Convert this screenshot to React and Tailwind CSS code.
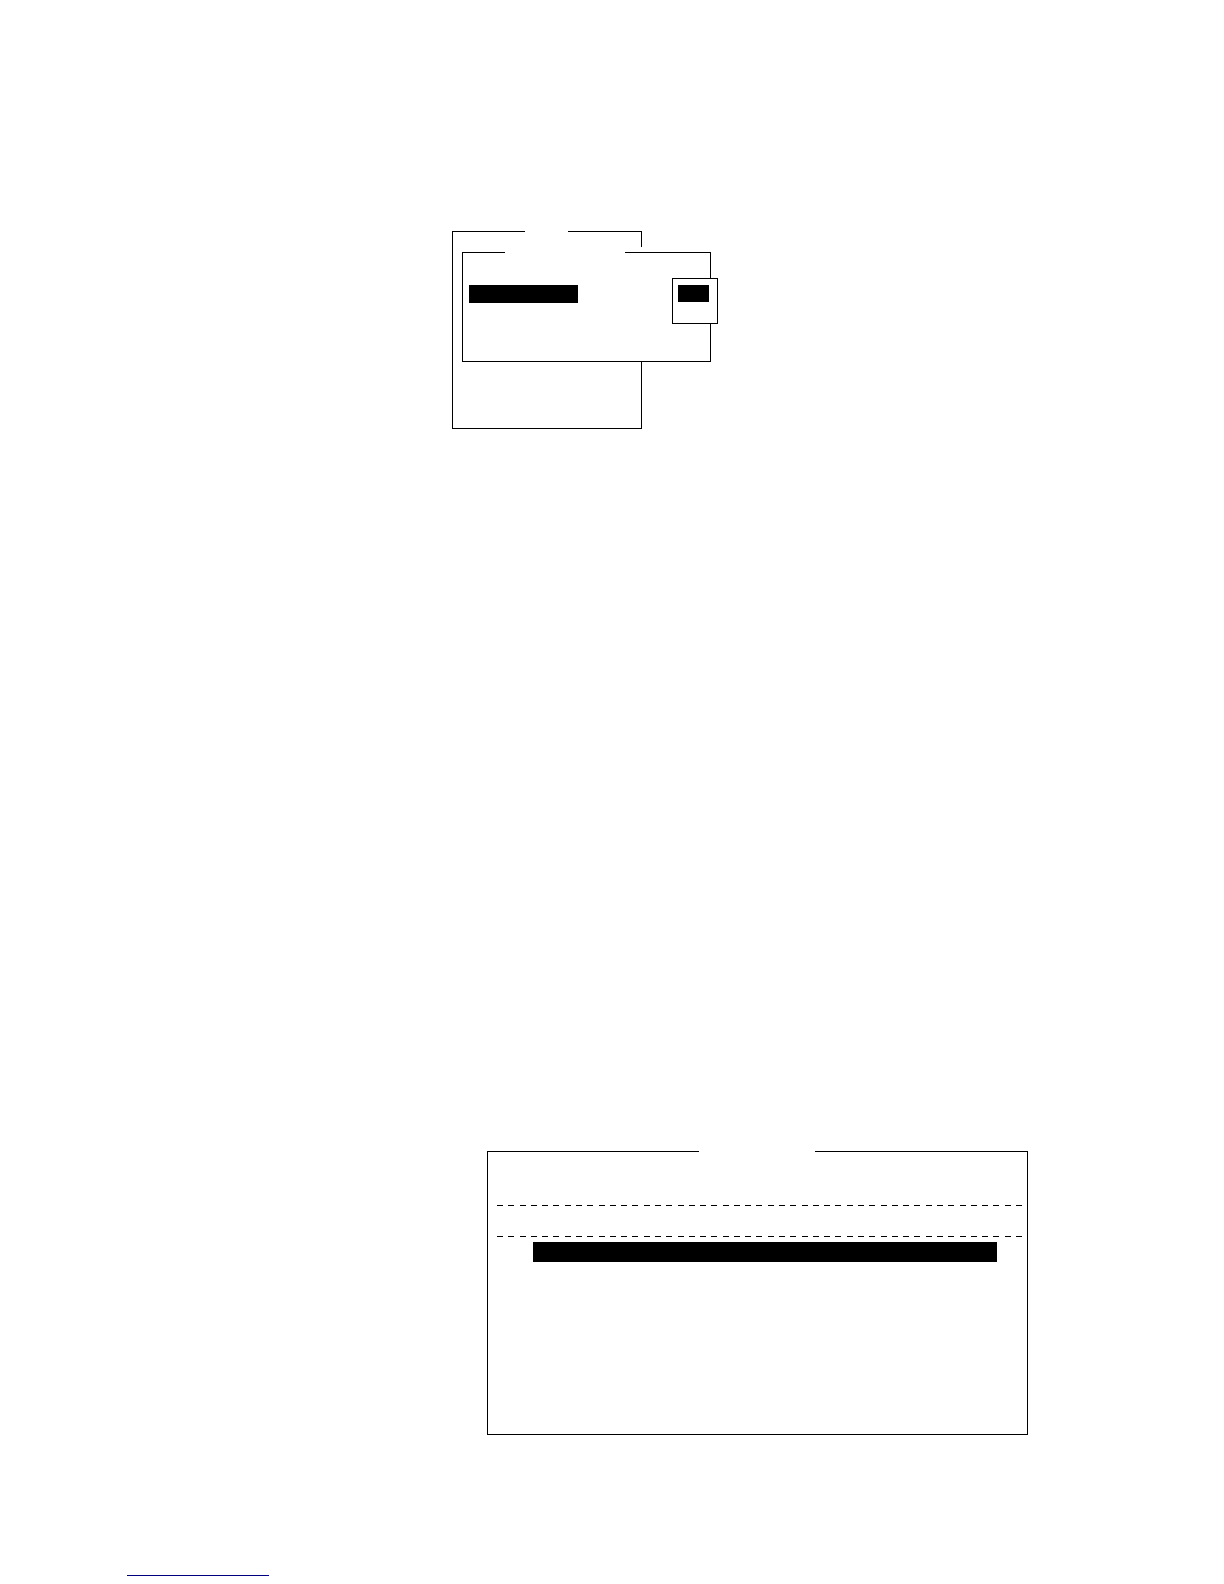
const DASHES = Array.from({ length: 47 }, (_, i) => i);

function DashedRule() {
  return (
    <div role="separator" className="flex h-px justify-between">
      {DASHES.map((i) => (
        <span key={i} className="h-px w-1.5 bg-black" />
      ))}
    </div>
  );
}

// Top edge of a window, open in the middle where its title would sit.
function TitleEdge({ left, gap }) {
  return (
    <div className="flex h-px">
      <span className={`h-px bg-black ${left}`} />
      <span className={`h-px ${gap}`} />
      <span className="h-px grow bg-black" />
    </div>
  );
}

function Menus() {
  return (
    <section aria-label="Menu windows" className="relative ml-[452px] w-[190px]">
      <TitleEdge left="w-[73px]" gap="w-[43px]" />
      <div className="h-[197px] border border-t-0 border-black" />

      <div className="absolute top-4 left-[10px] w-[249px] bg-white pt-[5px]">
        <TitleEdge left="w-[43px]" gap="w-[120px]" />
        <div className="h-[109px] border border-t-0 border-black px-1.5 pt-8">
          <button
            type="button"
            aria-label="Selected item"
            className="block h-[18px] w-[109px] bg-black"
          />
        </div>

        <div className="absolute top-[31px] -right-[7px] h-[46px] w-[46px] border border-black bg-white px-[5px] py-1.5">
          <button
            type="button"
            aria-label="Selected option"
            className="block h-[17px] w-[31px] bg-black"
          />
        </div>
      </div>
    </section>
  );
}

function ListWindow() {
  return (
    <section aria-label="List window" className="mr-[196px] ml-[487px]">
      <TitleEdge left="w-[212px]" gap="w-[116px]" />
      <div className="border border-t-0 border-black pt-[53px] pr-[5px] pb-[172px] pl-[9px]">
        <DashedRule />
        <div className="h-[30px]" />
        <DashedRule />
        <button
          type="button"
          aria-label="Selected row"
          className="mt-[5px] ml-9 block h-5 w-[464px] bg-black"
        />
      </div>
    </section>
  );
}

export default function App() {
  return (
    <main className="flex min-h-screen flex-col bg-white pt-[231px]">
      <Menus />
      <div className="h-[722px]" />
      <ListWindow />
      <a
        href="#top"
        aria-label="Back to top"
        className="mt-[120px] mb-2 ml-[127px] block h-[21px] w-[142px] border-b border-[#00007f]"
      />
    </main>
  );
}
